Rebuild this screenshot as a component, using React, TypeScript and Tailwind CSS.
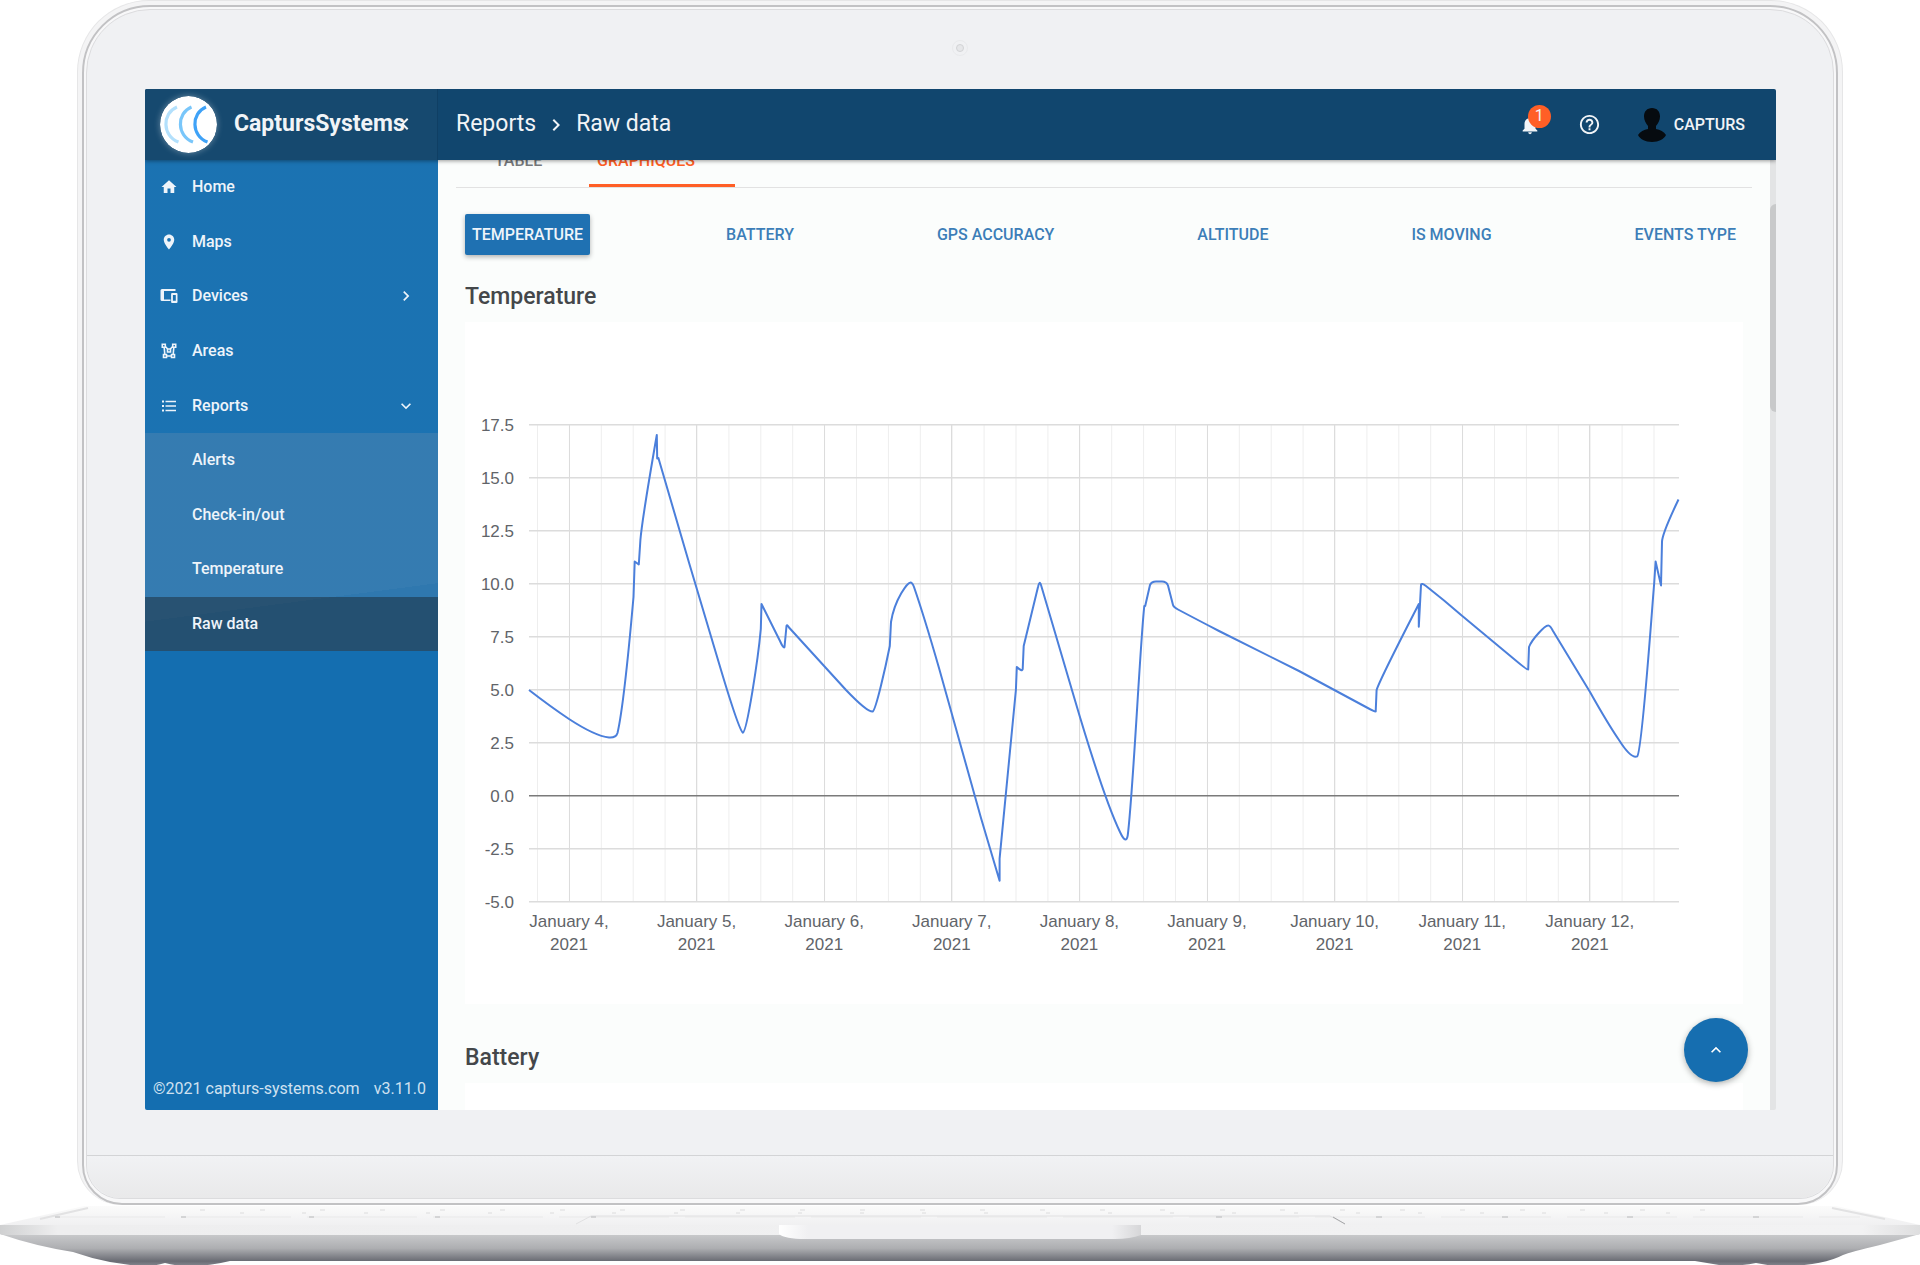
import { MdChevronLeft, MdChevronRight, MdExpandLess, MdExpandMore, MdHelpOutline, MdHome, MdNotifications, MdPlace } from "react-icons/md";

const ICON = "size-[18px] shrink-0";

function DevicesIcon() {
  return (
    <svg viewBox="0 0 18 18" className={ICON} fill="currentColor">
      <path d="M2 2h13.5v2H4v8.5h6.5V14H2a1.5 1.5 0 0 1-1.5-1.5v-9A1.5 1.5 0 0 1 2 2z" />
      <path d="M12 6h4.6c.5 0 .9.4.9.9v8.2c0 .5-.4.9-.9.9H12c-.5 0-.9-.4-.9-.9V6.900c0-.5.4-.9.9-.9zm.9 2v5.800h2.900V8z" />
    </svg>
  );
}

function AreasIcon() {
  return (
    <svg viewBox="0 0 18 18" className={ICON} fill="none" stroke="currentColor" strokeWidth="1.600">
      <path d="M2.300 2.300h3v3h-3zM12.700 2.300h3v3h-3zM7.500 7h3v3h-3zM3.500 12.500h3v3h-3zM11.500 12.500h3v3h-3z" />
      <path d="M5.300 4.500l2.400 2.500M12.700 4.500l-2.400 2.500M4.200 5.500l.6 7M13.800 5.500l-.6 7M6.500 14h5" />
    </svg>
  );
}

function ListIcon() {
  return (
    <svg viewBox="0 0 18 18" className={ICON} fill="currentColor">
      <path d="M2 3.500h2v2H2zM2 8h2v2H2zM2 12.500h2v2H2zM5.500 3.700H16v1.600H5.500zM5.500 8.200H16v1.600H5.500zM5.500 12.700H16v1.600H5.500z" />
    </svg>
  );
}

function Logo() {
  return (
    <svg viewBox="0 0 57 57" className="size-[57px] shrink-0 rounded-full shadow-[0_0_6px_rgba(255,255,255,0.35)]" fill="none" strokeWidth="3.200">
      <circle cx="28.500" cy="28.500" r="28.500" fill="#fff" />
      <path d="M17 11C2 17 2 40 18.500 46" stroke="#b3e0fc" />
      <path d="M31.500 11C16.500 17 16.500 40 33 46" stroke="#79c6fa" />
      <path d="M46 11C31 17 31 40 47.500 46" stroke="#3fa2f7" />
    </svg>
  );
}

const menu = [
  { label: "Home", icon: <MdHome className={ICON} /> },
  { label: "Maps", icon: <MdPlace className={ICON} /> },
  { label: "Devices", icon: <DevicesIcon />, arrow: <MdChevronRight className="size-5" /> },
  { label: "Areas", icon: <AreasIcon /> },
  { label: "Reports", icon: <ListIcon />, arrow: <MdExpandMore className="size-5" /> },
];

const reports = ["Alerts", "Check-in/out", "Temperature", "Raw data"];

const series = ["Battery", "GPS accuracy", "Altitude", "Is moving", "Events type"];

function Sidebar() {
  return (
    <aside className="flex w-[293px] shrink-0 flex-col bg-[#146eb0] bg-[linear-gradient(172.5deg,rgba(255,255,255,0.03)_46.7%,transparent_46.7%)] text-base font-medium text-[#eef4fa] shadow-[1px_0_4px_rgba(0,0,0,0.3)]">
      <nav>
        <ul className="grid h-[273px] auto-rows-fr">
          {menu.map(({ label, icon, arrow }) => (
            <li key={label}>
              <a href="#" className="flex h-full items-center gap-3.5 pr-[22px] pl-[15px]">
                {icon}
                <span className="flex-1">{label}</span>
                {arrow}
              </a>
            </li>
          ))}
        </ul>
        <ul className="grid h-[218px] auto-rows-fr">
          {reports.map((label) => (
            <li key={label}>
              <a
                href="#"
                className={
                  label === "Raw data"
                    ? "flex h-full items-center bg-[#353335]/51 pl-[47px]"
                    : "flex h-full items-center bg-[#aba4ac]/18 pl-[47px]"
                }
              >
                {label}
              </a>
            </li>
          ))}
        </ul>
      </nav>
      <footer className="mt-auto flex justify-between px-2 pr-3 pb-[9px] font-normal text-[#cfe1f0]">
        <span>©2021 capturs-systems.com</span>
        <span>v3.11.0</span>
      </footer>
    </aside>
  );
}

function Header() {
  return (
    <header className="relative z-10 flex h-[71px] bg-[#11466e] text-[#f1f4f7] shadow-[0_1px_4px_rgba(0,0,0,0.4)]">
      <div className="flex w-[293px] shrink-0 items-center border-r border-[#0f3f64] bg-[#16496f] pb-px pl-[15px]">
        <Logo />
        <span className="ml-[17px] text-[23px] font-bold">CaptursSystems</span>
        <button aria-label="Collapse menu" className="-ml-3">
          <MdChevronLeft className="size-6" />
        </button>
      </div>
      <div className="flex items-center gap-2 pl-[18px] text-[23px]">
        <a href="#">Reports</a>
        <MdChevronRight className="size-6" />
        <span>Raw data</span>
      </div>
      <div className="ml-auto flex items-center pr-[31px]">
        <button aria-label="Notifications" className="relative mr-[37px]">
          <MdNotifications className="size-[22px]" />
          <span className="absolute -top-[9px] left-[9px] flex size-[23px] items-center justify-center rounded-full bg-[#ff5f26] text-base">1</span>
        </button>
        <button aria-label="Help" className="mr-[37px]">
          <MdHelpOutline className="size-[23px]" />
        </button>
        <button className="flex items-center gap-2 text-base font-medium">
          <svg viewBox="0 0 28 34" className="h-[34px] w-7" fill="#060b10">
            <path d="M14 0c5 0 8 3.500 8 8.500 0 4-2 7-4 9.500v3c4 1 8 2.500 10 6-2 4-7 7-14 7S2 31 0 27c2-3.500 6-5 10-6v-3c-2-2.500-4-5.500-4-9.500C6 3.500 9 0 14 0z" />
          </svg>
          CAPTURS
        </button>
      </div>
    </header>
  );
}

const DAY = 127.6;
const STEP = 52.95;
const days = [4, 5, 6, 7, 8, 9, 10, 11, 12];
const levels = ["17.5", "15.0", "12.5", "10.0", "7.5", "5.0", "2.5", "0.0", "-2.5", "-5.0"];

const curve =
  "M0 265Q22 282 40 294Q66 311 80 312.500Q87 313 88.500 308Q95 280 104.500 172L105.700 136.500L109.800 139.500L111.400 115Q113 95 127.800 10L128.200 33.500L129.400 33" +
  "L161 141L192 245Q210 305 213.900 307.700C218 306 229 235 231.800 204L232.500 179L251 216Q254.500 224 255.500 222L257.500 201Q258 199 260 202.500" +
  "L317 265Q338 287 343.700 286.600C347 285 357 240 360.800 221L362 197C366 173 379 157.700 381 157.700Q383 157 385 162Q395 191 410 243L452 393L470.600 455.800V433.600" +
  "L486.900 265L487.800 242Q493 247 493.700 244L494.700 221L509 162Q510.500 155 512 160L545 272C560 323 578 380 591 407Q597 420 598.700 410.600" +
  "C604 370 611 220 615.300 181L616.200 181L621 160Q622.500 156.500 627 156.500H633Q637.500 156.500 639 160.500L644 180Q644.500 182 649 184.500" +
  "Q665 193 690 206L770 246L836 281.500Q846 287 846.700 286.500L847.600 265Q850 257 877 204L889.800 179V201.700L892 160Q892.500 157.500 897 161Q915 175 932.700 190.600" +
  "L985 234Q998 245 999.200 244.500L1000 222C1003 214 1016 200.500 1019 200.500Q1021 200 1024 206L1061 267Q1079 299 1090 315Q1102 334 1108.200 331.400" +
  "C1113 326 1121 210 1125.200 158L1126.600 136.500L1132 160.400L1133 117Q1133 109 1149.500 74.500";

function TemperatureChart() {
  return (
    <svg viewBox="0 0 1278 682" className="h-auto w-full bg-white" role="img" aria-label="Temperature from January 4 to January 12, 2021">
      <g transform="translate(64 103)">
        <g fill="#eee">
          {Array.from({ length: 36 }, (_, i) => (
            <rect key={i} x={8 + (i * DAY) / 4} width="1" height="476.5" />
          ))}
        </g>
        <g fill="#dcdcdc">
          {days.map((day, i) => (
            <rect key={day} x={Math.round(39.500 + i * DAY)} width="1" height="476.5" />
          ))}
          {levels.map((level, i) => (
            <rect key={level} y={Math.round(i * STEP) - 1} width="1150" height={1.5} fill={level === "0.0" ? "#7a7a7a" : undefined} />
          ))}
        </g>
        <path d={curve} fill="none" stroke="#4b7fdb" strokeWidth="2" strokeLinejoin="round" />
        <g className="fill-[#616469] font-['Liberation_Sans',Arial,sans-serif] text-[17px]">
          {levels.map((level, i) => (
            <text key={level} x="-15" y={i * STEP + 6} textAnchor="end">
              {level}
            </text>
          ))}
          {days.map((day, i) => (
            <text key={day} y="502" textAnchor="middle">
              <tspan x={40 + i * DAY}>January {day},</tspan>
              <tspan x={40 + i * DAY} dy="23">2021</tspan>
            </text>
          ))}
        </g>
      </g>
    </svg>
  );
}

function Report() {
  return (
    <main className="min-w-0 flex-1 bg-[#fbfdfc] text-[#44474a]">
      {/* scrolled so that only the foot of the tabs shows */}
      <div className="mx-[18px] flex h-7 items-end overflow-hidden border-b border-[#e2e2e2] text-base font-medium">
        <a href="#" className="flex h-14 w-[133px] items-center justify-center pt-1 pr-2 text-[#77797c]">TABLE</a>
        <a href="#" className="flex h-14 w-[146px] items-center justify-center border-b-3 border-[#ff5f26] pt-1.5 pr-8 text-[#ff5f26]">GRAPHIQUES</a>
      </div>
      <div className="px-[27px]">
        <div className="mt-[26px] flex justify-between text-base font-medium text-[#3c7eb8]">
          <button className="h-[41px] rounded-xs bg-[#1f71b2] px-[7px] text-[#eef4fa] shadow-[0_2px_5px_rgba(0,0,0,0.3)]">TEMPERATURE</button>
          {series.map((name) => (
            <button key={name} className="px-[7px] uppercase">{name}</button>
          ))}
        </div>
        <h2 className="mt-[27px] mb-[10px] text-[23px] leading-[30px] font-medium">Temperature</h2>
        <TemperatureChart />
        <h2 className="mt-[39px] mb-[10px] text-[23px] leading-[30px] font-medium">Battery</h2>
        <div className="h-[27px] bg-white" />
      </div>
    </main>
  );
}

function Base() {
  return (
    <svg viewBox="0 0 1920 61" className="block h-auto w-full">
      <defs>
        <linearGradient id="under" x1="0" y1="0" x2="0" y2="1">
          <stop offset="0" stopColor="#c9cacc" />
          <stop offset="0.45" stopColor="#adaeb1" />
          <stop offset="0.85" stopColor="#696b73" />
          <stop offset="1" stopColor="#858790" />
        </linearGradient>
        <linearGradient id="keys" x1="0" y1="0" x2="0" y2="1">
          <stop offset="0" stopColor="#fbfbfb" />
          <stop offset="1" stopColor="#f0f0f1" />
        </linearGradient>
        <linearGradient id="lip">
          <stop offset="0" stopColor="#cfd0d1" />
          <stop offset="0.03" stopColor="#eeeeef" />
          <stop offset="0.97" stopColor="#f2f2f3" />
          <stop offset="1" stopColor="#dededf" />
        </linearGradient>
        <linearGradient id="notch">
          <stop offset="0" stopColor="#fff" />
          <stop offset="0.08" stopColor="#f0f0f2" />
          <stop offset="0.92" stopColor="#f0f0f2" />
          <stop offset="1" stopColor="#d6d6d8" />
        </linearGradient>
      </defs>
      <path d="M0 29H1920L1880 40Q1850 47 1843 50Q1824 60 1787 61Q1770 61 1756 58Q1735 62 1719 60L1695 56H230Q210 61 190 61Q175 61 165 58Q155 61 147 61Q110 60 73 47Q35 41 0 29z" fill="url(#under)" />
      <path d="M84 1H1836L1920 20H0z" fill="url(#keys)" />
      <path d="M88 3L40 14M1832 3L1885 14" stroke="#e2e2e3" strokeWidth="2" />
      <path d="M55 12H1860" stroke="#e9e9ea" strokeDasharray="110 16" />
      <path d="M200 5H1750" stroke="#dcdcdd" strokeDasharray="5 55" />
      <path d="M240 8H1700" stroke="#dcdcdd" strokeDasharray="4 58" />
      <path d="M576 19L591 11H1330L1345 19" fill="none" stroke="#e1e1e2" />
      <path d="M55 12h5M181 12h5M309 12h5M435 12h5M591 12h5M1216 12h6M1376 12h6M1502 12h6M1627 12h6M1753 12h6" stroke="#b9babc" />
      <path d="M1333 12L1345 19" stroke="#a5a6a8" />
      <path d="M0 20H1920V29Q1919 30 1915 30H5Q1 30 0 29z" fill="url(#lip)" />
      <path d="M779 20H1141V30Q1130 34 1115 34H805Q785 34 779 29z" fill="url(#notch)" />
    </svg>
  );
}

export default function App() {
  return (
    <div className="overflow-hidden bg-white font-[Roboto,sans-serif]">
      <div className="mx-[77px] rounded-t-[72px] rounded-b-[44px] border border-b-0 border-[#e6e6e7] bg-[#f4f4f5] px-1 pt-1">
        <div className="rounded-t-[68px] rounded-b-[40px] border-2 border-[#c2c2c4] bg-[#f8f8f9] px-0.5 pt-0.5 pb-1">
          <div className="rounded-t-[64px] rounded-b-[34px] border border-[#dcdcde] bg-[#f0f1f3]">
            <div className="flex h-[79px] items-center justify-center pb-1">
              <span className="flex size-4 items-center justify-center rounded-full border border-[#e9eaec]">
                <span className="size-2 rounded-full border border-[#d2d3d5] bg-[#e6e7e9]" />
              </span>
            </div>
            <div className="relative mr-[57px] ml-[58px] overflow-hidden rounded-xs">
              <Header />
              <div className="flex">
                <Sidebar />
                <Report />
                <div className="w-1.5 shrink-0 bg-[#e3e4e5] pt-11">
                  <div className="h-[208px] rounded-l-md bg-[#c8c9ca]" />
                </div>
              </div>
              <button aria-label="Back to top" className="absolute right-[28px] bottom-[28px] flex size-16 items-center justify-center rounded-full bg-[#166eb0] text-white shadow-[0_2px_6px_rgba(0,0,0,0.3)]">
                <MdExpandLess className="size-5" />
              </button>
            </div>
            <div className="mt-[45px] h-[43px] rounded-b-[34px] border-t border-[#d3d4d6] bg-linear-to-b from-[#f1f2f4] to-[#e9e9ea]" />
          </div>
        </div>
      </div>
      <Base />
    </div>
  );
}
